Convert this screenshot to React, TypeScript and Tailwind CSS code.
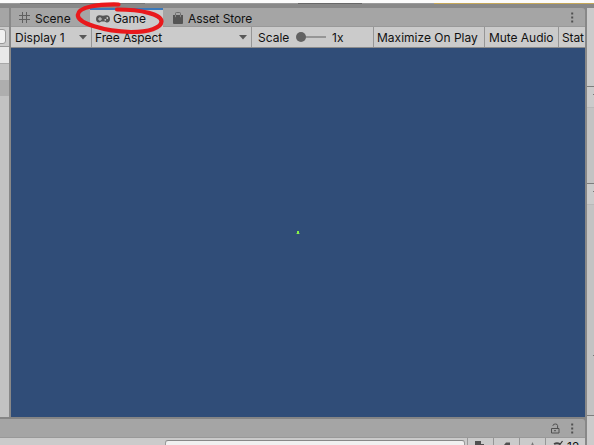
import type { ReactNode } from "react";

function Kebab() {
  return (
    <svg className="block h-[11px] w-[3px]" viewBox="0 0 3 11" fill="#505050">
      <rect x=".2" y=".5" width="2" height="2" />
      <rect x=".2" y="4.5" width="2" height="2" />
      <rect x=".2" y="8.5" width="2" height="2" />
    </svg>
  );
}

function Arrow() {
  return (
    <svg className="block h-[5px] w-2 shrink-0" viewBox="0 0 8 5">
      <path d="M0 0h8L4 4.6z" fill="#585858" />
    </svg>
  );
}

function Cell({ className, children }: { className: string; children?: ReactNode }) {
  return (
    <div className={`flex h-full shrink-0 items-center whitespace-nowrap border-r border-[#969696] ${className}`}>
      {children}
    </div>
  );
}

function LeftColumn() {
  return (
    <div className="flex w-[9px] shrink-0 flex-col bg-[#c2c2c2]">
      <div className="h-[19px] border-b border-[#999] bg-[#a5a5a5]" />
      <div className="flex h-[20px] items-center overflow-hidden border-b border-[#999] bg-[#cbcbcb]">
        <div className="-ml-2 h-[15px] w-[14px] rounded-[3px] border border-[#999] bg-[#f0f0f0]" />
      </div>
      <div className="h-[17px] border-b border-[#a8a8a8] bg-[#e8e8e8]" />
      <div className="mt-4 h-4 bg-[#aeaeae]" />
    </div>
  );
}

function RightColumn() {
  return (
    <div className="flex w-[7px] shrink-0 flex-col bg-[#c3c3c3]">
      <div className="h-[79px] border-b border-[#7d7d7d] bg-[#cbcbcb]" />
      <div className="flex h-[21px] justify-end border-b border-[#b9b9b9] bg-[#cbcbcb] pt-[7px]">
        <div className="h-px w-px bg-[#777]" />
      </div>
      <div className="h-[76px] border-b border-[#7d7d7d]" />
      <div className="flex h-[21px] justify-end border-b border-[#b9b9b9] bg-[#cbcbcb] pt-[7px]">
        <div className="h-px w-px bg-[#777]" />
      </div>
      <div className="flex h-[211px] justify-end border-b border-[#7d7d7d] pt-[150px]">
        <div className="h-px w-px bg-[#777]" />
      </div>
      <div className="grow bg-[#cbcbcb]" />
    </div>
  );
}

function Tabs() {
  return (
    <div className="flex h-[19px] shrink-0 rounded-tr-[3px] bg-[#a5a5a5]">
      <div className="flex w-[79px] items-center border-b border-[#999] pl-2">
        <svg className="block h-[11px] w-[11px]" viewBox="0 0 11 11" stroke="#606060" strokeWidth="1" fill="none">
          <path d="M3.500 0v11M7.500 0v11M0 3.500h11M0 7.500h11" />
        </svg>
        <span className="relative top-px ml-[5px]">Scene</span>
      </div>
      <div className="flex w-[73px] items-center border-t-2 border-[#3a79bb] bg-[#cbcbcb] pl-[6px]">
        <svg className="block h-[8px] w-[14px]" viewBox="0 0 14 8">
          <path d="M3.800.3Q7 1 10.200.3C12.500 0 14 1.800 14 4S12.500 8 10.500 7.500L8.600 6.500H5.400L3.500 7.500C1.500 8 0 6.300 0 4S1.500 0 3.800.3Z" fill="#555" />
          <path d="M2 4h4M4 2v4" stroke="#cbcbcb" strokeWidth="1" />
          <circle cx="11.300" cy="3" r=".9" fill="#cbcbcb" />
          <circle cx="9.300" cy="4.800" r=".9" fill="#cbcbcb" />
        </svg>
        <span className="ml-[3px] tracking-[-0.1px]">Game</span>
      </div>
      <div className="flex grow items-center justify-between border-b border-[#999] pl-[10px] pr-[11px]">
        <div className="flex items-center">
          <svg className="mt-px block h-3 w-[10px]" viewBox="0 0 10 12">
            <path d="M2.500 4V1.500Q2.500.5 3.500.5h3q1 0 1 1V4" fill="none" stroke="#666" strokeWidth=".9" />
            <path d="M0 3h10v8q0 1-1 1H1q-1 0-1-1z" fill="#555" />
            <path d="M2.500 3v2.200M7.500 3v2.200" stroke="#8c8c8c" strokeWidth=".9" />
          </svg>
          <span className="relative top-px ml-[5px] tracking-[-0.1px]">Asset Store</span>
        </div>
        <Kebab />
      </div>
    </div>
  );
}

function Toolbar() {
  return (
    <div className="flex h-[21px] shrink-0 overflow-hidden border-b border-[#8c8c8c] bg-[#cbcbcb]">
      <Cell className="w-[81px] justify-between pl-1 pr-1"><span>Display 1</span><Arrow /></Cell>
      <Cell className="w-[160px] justify-between pl-[3px] pr-1"><span className="tracking-[-0.1px]">Free Aspect</span><Arrow /></Cell>
      <Cell className="w-[122px] pl-[6px]">
        <span className="w-[38px]">Scale</span>
        <svg className="block h-[10px] w-[30px]" viewBox="0 0 30 10">
          <path d="M5 5h25" stroke="#858585" strokeWidth="1.500" />
          <circle cx="5" cy="5" r="5" fill="#626262" />
        </svg>
        <span className="ml-[6px]">1x</span>
      </Cell>
      <Cell className="w-[111px] pl-[3px]">Maximize On Play</Cell>
      <Cell className="w-[74px] pl-1 tracking-[-0.05px]">Mute Audio</Cell>
      <div className="flex items-center pl-[3px] tracking-[-0.1px]">Stat</div>
    </div>
  );
}

function BottomPanel() {
  return (
    <div className="flex h-[28px] w-[585px] shrink-0 flex-col border-t-2 border-[#858585] bg-[#858585]">
      <div className="flex h-[19px] shrink-0 items-center justify-end gap-[11px] rounded-tr-[3px] border-b border-[#999] bg-[#a5a5a5] pr-[11px]">
        <svg className="block h-[11px] w-[9px]" viewBox="0 0 9 11" fill="none" stroke="#505050" strokeWidth="1">
          <path d="M.5 5.500h7.500v4.500H.5zM2 3V2.500q0-1.500 2.300-1.500T6.600 2.500v3M3 7.700h2" />
        </svg>
        <Kebab />
      </div>
      <div className="flex h-[7px] overflow-hidden bg-[#cbcbcb]">
        <div className="ml-[165px] mt-[2px] h-4 w-[300px] shrink-0 rounded-[3px] border border-[#999] border-t-[#888] bg-[#f0f0f0]" />
        <div className="ml-[2px] flex grow border-l border-[#999]">
          <Cell className="w-[26px] pl-[7px]">
            <svg className="block h-[7px] w-[12px]" viewBox="0 0 12 7" fill="#505050"><path d="M0 3h6v4H0zM6 6h3v1H6z" /></svg>
          </Cell>
          <Cell className="w-[26px] pl-[9px]">
            <svg className="block h-[7px] w-2" viewBox="0 0 8 7" fill="#505050"><path d="M1 7 3 4.500h4V7z" /></svg>
          </Cell>
          <Cell className="w-[26px] pl-[10px]">
            <svg className="block h-[7px] w-[5px]" viewBox="0 0 5 7" fill="#777"><path d="m2.500 4 1.300 3H1.200z" /></svg>
          </Cell>
          <div className="flex items-start overflow-hidden pl-[7px] text-[12px] leading-[14px]">
            <svg className="block h-[7px] w-[12px]" viewBox="0 0 12 7">
              <path d="M1 6q3-1.500 6 0" fill="none" stroke="#444" strokeWidth="1.800" />
              <path d="m6.500 7 3-4" stroke="#333" strokeWidth="1.200" />
            </svg>
            <span className="ml-[2px] mt-[2px] whitespace-nowrap">12</span>
          </div>
        </div>
      </div>
    </div>
  );
}

export default function App() {
  return (
    <div className="relative flex h-[445px] w-[594px] flex-col overflow-hidden bg-[#888] font-['Inter',sans-serif] text-[12px] leading-[15px] text-[#111]">
      <div className="flex h-[4px] shrink-0 flex-col bg-[#fbfbfb] pt-[3px]">
        <div className="flex h-px bg-[#999]">
          <div className="ml-5 h-px w-[125px] bg-[#777]" />
          <div className="ml-[153px] h-px w-[64px] bg-[#686868]" />
          <div className="ml-[72px] h-px grow bg-[#c5a758]" />
        </div>
      </div>
      <div className="flex grow pt-1">
        <div className="flex w-[585px] shrink-0 flex-col">
          <div className="flex h-[409px] shrink-0">
            <LeftColumn />
            <div className="ml-[2px] flex w-[574px] flex-col">
              <Tabs />
              <Toolbar />
              <div className="flex grow items-center justify-center bg-[#304d78]">
                <svg className="block h-1 w-1" viewBox="0 0 4 4"><path d="M0 2h4v1H0z" fill="#588c69" /><path d="M1 0h2v3H1z" fill="#87f547" /></svg>
              </div>
            </div>
          </div>
          <BottomPanel />
        </div>
        <div className="ml-[2px] flex"><RightColumn /></div>
      </div>
      <svg className="absolute left-[70px] top-0 h-[40px] w-[100px]" viewBox="70 0 100 40" fill="none" stroke="#e9191c" strokeWidth="4.200" strokeLinecap="round">
        <path d="M118.500 4.500C98 4 78.500 7 77.800 15C77.500 23 104 31.500 131 32C149 32 161 28 161.500 21.500C161.500 14.500 142 9.500 117 9.500" />
      </svg>
    </div>
  );
}
